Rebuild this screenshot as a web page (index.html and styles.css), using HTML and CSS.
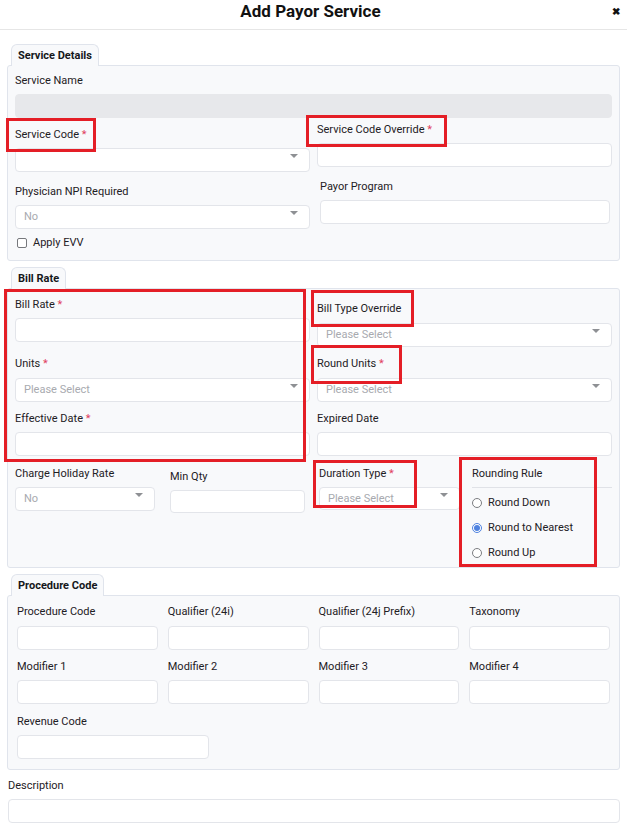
FILE: index.html
```html
<!DOCTYPE html>
<html>
<head>
<meta charset="utf-8">
<link rel="stylesheet" href="styles.css">
</head>
<body>
<div class="page">
  <header class="hdr">
    <h1 class="title">Add Payor Service</h1>
    <span class="close">&#x2716;</span>
  </header>

  <main class="content">
    <section class="sec sec-first">
      <div class="tab">Service Details</div>
      <div class="panel p1">
        <div class="field">
          <label class="lbl">Service Name</label>
          <div class="inp disabled"></div>
        </div>
        <div class="cols2">
          <div class="col col-l">
            <div class="field">
              <label class="lbl">Service Code <span class="req">*</span></label>
              <div class="inp sel"><span class="arrow"></span></div>
            </div>
            <div class="field mt12">
              <label class="lbl">Physician NPI Required</label>
              <div class="inp sel"><span class="ph">No</span><span class="arrow"></span></div>
            </div>
            <div class="check-row">
              <span class="checkbox"></span><span class="check-lbl">Apply EVV</span>
            </div>
          </div>
          <div class="col col-r">
            <div class="field">
              <label class="lbl">Service Code Override <span class="req">*</span></label>
              <div class="inp"></div>
            </div>
            <div class="field mt12 payor">
              <label class="lbl">Payor Program</label>
              <div class="inp"></div>
            </div>
          </div>
        </div>
      </div>
    </section>

    <section class="sec">
      <div class="tab">Bill Rate</div>
      <div class="panel p2">
        <div class="grid2">
          <div class="field">
            <label class="lbl">Bill Rate <span class="req">*</span></label>
            <div class="inp"></div>
          </div>
          <div class="field shift4">
            <label class="lbl mb8">Bill Type Override</label>
            <div class="inp sel"><span class="ph">Please Select</span><span class="arrow"></span></div>
          </div>
          <div class="field">
            <label class="lbl mb8">Units <span class="req">*</span></label>
            <div class="inp sel"><span class="ph">Please Select</span><span class="arrow"></span></div>
          </div>
          <div class="field">
            <label class="lbl mb8">Round Units <span class="req">*</span></label>
            <div class="inp sel"><span class="ph">Please Select</span><span class="arrow"></span></div>
          </div>
          <div class="field">
            <label class="lbl">Effective Date <span class="req">*</span></label>
            <div class="inp"></div>
          </div>
          <div class="field">
            <label class="lbl">Expired Date</label>
            <div class="inp"></div>
          </div>
        </div>
        <div class="row4">
          <div class="field c1">
            <label class="lbl">Charge Holiday Rate</label>
            <div class="inp sel"><span class="ph">No</span><span class="arrow"></span></div>
          </div>
          <div class="field c2">
            <label class="lbl">Min Qty</label>
            <div class="inp h23"></div>
          </div>
          <div class="field c3">
            <label class="lbl">Duration Type <span class="req">*</span></label>
            <div class="inp sel h23"><span class="ph">Please Select</span><span class="arrow"></span></div>
          </div>
          <div class="c4">
            <div class="rr-title">Rounding Rule</div>
            <ul class="radios">
              <li class="radio-row"><span class="radio"></span>Round Down</li>
              <li class="radio-row"><span class="radio on"></span>Round to Nearest</li>
              <li class="radio-row"><span class="radio"></span>Round Up</li>
            </ul>
          </div>
        </div>
      </div>
    </section>

    <section class="sec">
      <div class="tab">Procedure Code</div>
      <div class="panel p3">
        <div class="grid4">
          <div class="field"><label class="lbl mb8">Procedure Code</label><div class="inp"></div></div>
          <div class="field"><label class="lbl mb8">Qualifier (24i)</label><div class="inp"></div></div>
          <div class="field"><label class="lbl mb8">Qualifier (24j Prefix)</label><div class="inp"></div></div>
          <div class="field"><label class="lbl mb8">Taxonomy</label><div class="inp"></div></div>
          <div class="field"><label class="lbl">Modifier 1</label><div class="inp"></div></div>
          <div class="field"><label class="lbl">Modifier 2</label><div class="inp"></div></div>
          <div class="field"><label class="lbl">Modifier 3</label><div class="inp"></div></div>
          <div class="field"><label class="lbl">Modifier 4</label><div class="inp"></div></div>
        </div>
        <div class="field revenue">
          <label class="lbl">Revenue Code</label>
          <div class="inp"></div>
        </div>
      </div>
    </section>

    <div class="field desc">
      <label class="lbl">Description</label>
      <div class="inp"></div>
    </div>
  </main>

  <div class="mark m1"></div>
  <div class="mark m2"></div>
  <div class="mark m3"></div>
  <div class="mark m4"></div>
  <div class="mark m5"></div>
  <div class="mark m6"></div>
  <div class="mark m7"></div>
</div>
</body>
</html>
```

FILE: styles.css
```css
* { box-sizing: border-box; }
html, body { margin: 0; padding: 0; background: #fff; }
body {
  font-family: Roboto, "Liberation Sans", Arial, sans-serif;
  font-size: 11px;
  color: #1e2024;
}
.page { position: relative; width: 627px; height: 836px; overflow: hidden; }

.hdr {
  height: 30px;
  border-bottom: 1px solid #e6e6e6;
  display: flex;
  justify-content: center;
  position: relative;
}
.title {
  margin: 0;
  font-size: 17px;
  font-weight: 700;
  line-height: 22px;
  color: #111;
  padding-right: 6px;
}
.close {
  position: absolute;
  right: 7px;
  top: 4px;
  font-size: 10px;
  line-height: 16px;
  font-weight: 700;
  color: #111;
}

.content { padding: 0 7px; }

.sec { margin-top: 6px; }
.sec-first { margin-top: 14px; }

.tab {
  display: inline-block;
  position: relative;
  z-index: 1;
  margin-left: 4px;
  margin-bottom: -1px;
  height: 22px;
  padding: 1px 6px 0;
  line-height: 20px;
  font-weight: 700;
  font-size: 11px;
  color: #15171a;
  background: #f8f9fb;
  border: 1px solid #e0e4ec;
  border-bottom: 0;
  border-radius: 6px 6px 0 0;
  vertical-align: top;
}
.panel {
  background: #f8f9fb;
  border: 1px solid #e0e4ec;
  border-radius: 3px;
}

.field { display: flex; flex-direction: column; }
.lbl {
  display: block;
  position: relative;
  top: 1px;
  line-height: 14px;
  height: 14px;
  margin-bottom: 7px;
  white-space: nowrap;
  color: #1e2024;
}
.mb8 { margin-bottom: 8px; }
.req { color: #e0405e; }

.inp {
  position: relative;
  height: 24px;
  background: #fff;
  border: 1px solid #e3e5ea;
  border-radius: 4px;
}
.inp.h23 { height: 23px; }
.inp.disabled { background: #e7e8eb; border-color: #e7e8eb; }
.ph {
  position: absolute;
  left: 8px;
  top: 0;
  line-height: 22px;
  color: #a8aaaf;
  font-size: 11px;
}
.arrow {
  position: absolute;
  right: 11px;
  top: 5px;
  width: 0;
  height: 0;
  border-left: 4px solid transparent;
  border-right: 4px solid transparent;
  border-top: 4px solid #8e9094;
}

/* panel 1 */
.p1 { padding: 7px 7px 12px; }
.cols2 {
  display: grid;
  grid-template-columns: 295px 295px;
  column-gap: 7px;
}
.col-l { padding-top: 9px; }
.col-r { padding-top: 4px; }
.mt12 { margin-top: 12px; }
.payor { margin-left: 3px; width: 290px; }
.check-row {
  display: flex;
  align-items: center;
  margin-top: 7px;
  height: 12px;
  padding-left: 2px;
  position: relative;
  top: 1px;
}
.checkbox {
  width: 10px;
  height: 10px;
  border: 1px solid #76787c;
  border-radius: 2px;
  background: #fff;
  margin-right: 6px;
}
.check-lbl { line-height: 12px; }

/* panel 2 */
.p2 { padding: 8px 7px 2px; }
.grid2 {
  display: grid;
  grid-template-columns: 295px 295px;
  column-gap: 7px;
  row-gap: 9px;
  align-items: start;
}
.shift4 { padding-top: 4px; }
.row4 {
  display: flex;
  align-items: flex-start;
  margin-top: 10px;
}
.c1 { width: 140px; }
.c2 { width: 135px; margin-left: 15px; padding-top: 3px; }
.c3 { width: 141px; margin-left: 14px; }
.c4 { width: 140px; margin-left: 12px; }
.rr-title {
  line-height: 14px;
  padding-top: 1px;
  padding-bottom: 6px;
  border-bottom: 1px solid #e0e2e7;
}
.radios { list-style: none; margin: 0; padding: 2px 0 0; }
.radio-row {
  display: flex;
  align-items: center;
  height: 25px;
  line-height: 25px;
}
.radio {
  width: 10px;
  height: 10px;
  border: 1px solid #7b7d81;
  border-radius: 50%;
  background: #fff;
  margin: 0 6px 0 0;
  position: relative;
}
.radio.on { border-color: #4f82e0; }
.radio.on::after {
  content: "";
  position: absolute;
  left: 1px;
  top: 1px;
  width: 6px;
  height: 6px;
  border-radius: 50%;
  background: #4f82e0;
}

/* panel 3 */
.p3 { padding: 8px 9px 10px; }
.grid4 {
  display: grid;
  grid-template-columns: repeat(4, 1fr);
  column-gap: 10px;
  row-gap: 9px;
}
.revenue { width: 192px; margin-top: 10px; }

.desc { margin-top: 8px; margin-left: 1px; width: 612px; }

/* annotation marks */
.mark {
  position: absolute;
  border: 3px solid #e41e26;
  pointer-events: none;
}
.m1 { left: 6px; top: 118px; width: 90px; height: 34px; }
.m2 { left: 306px; top: 115px; width: 141px; height: 32px; }
.m3 { left: 4px; top: 289px; width: 302px; height: 173px; }
.m4 { left: 311px; top: 290px; width: 103px; height: 37px; }
.m5 { left: 311px; top: 345px; width: 91px; height: 39px; }
.m6 { left: 313px; top: 460px; width: 104px; height: 48px; }
.m7 { left: 459px; top: 457px; width: 138px; height: 110px; }
```
